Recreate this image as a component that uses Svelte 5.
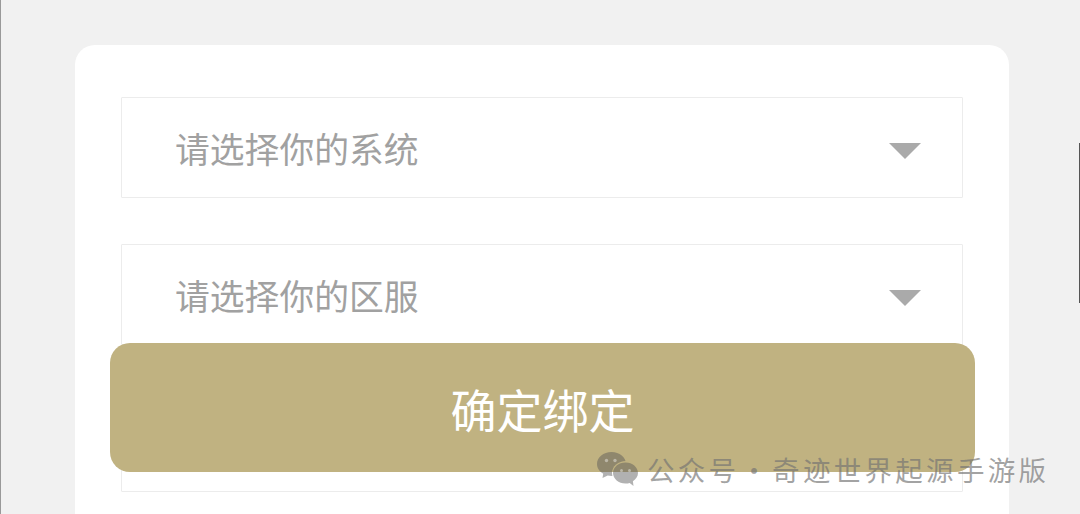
<script>
  const fields = ["请选择你的系统", "请选择你的区服", ""];
</script>

<div class="page">
  <div class="card">
    {#each fields as label}
      <div class="field">
        <span class="label">{label}</span>
        {#if label}
          <span class="arrow"></span>
        {/if}
      </div>
    {/each}
    <button class="submit">确定绑定</button>
  </div>
  <div class="mark">
    <svg width="41" height="36" viewBox="0 0 41 36">
      <mask id="gap">
        <rect width="41" height="36" fill="#fff"/>
        <ellipse cx="29" cy="22" rx="14" ry="12" fill="#000"/>
      </mask>
      <g fill="#555" fill-opacity="0.46">
        <path mask="url(#gap)" d="M14.500 1C6.500 1 0 6.400 0 13c0 4 2.400 7.500 6.200 9.700L5.500 27l5.200-2.400c1.200.3 2.500.4 3.800.4C22.500 25 29 19.600 29 13S22.500 1 14.500 1z"/>
        <path d="M41 22c0-5.800-5.600-10.500-12.500-10.500S16 16.200 16 22s5.600 10.500 12.500 10.500c1.500 0 2.900-.2 4.200-.6l3.800 3.100-.6-4.800C39 28.300 41 25.300 41 22z"/>
      </g>
      <g fill="#fff" fill-opacity="0.4">
        <circle cx="9.500" cy="9.500" r="1.700"/>
        <circle cx="18" cy="9.500" r="1.700"/>
        <circle cx="24.500" cy="19.500" r="1.500"/>
        <circle cx="32.500" cy="19.500" r="1.500"/>
      </g>
    </svg>
    <span class="mark-text">公众号 · 奇迹世界起源手游版</span>
  </div>
</div>

<style>
  :global(body) {
    margin: 0;
    background: #f1f1f1;
  }

  .page {
    position: relative;
    width: 1080px;
    height: 514px;
    box-sizing: border-box;
    padding: 45px 0 0 75px;
    overflow: hidden;
    background: #f1f1f1;
    font-family: "Noto Sans CJK SC", "Liberation Sans", sans-serif;
  }

  /* scrollbar-ish lines at the edges of the capture */
  .page::before {
    content: "";
    position: absolute;
    left: 0;
    top: 0;
    width: 1px;
    height: 100%;
    background: #999;
  }

  .page::after {
    content: "";
    position: absolute;
    right: 0;
    top: 143px;
    width: 1px;
    height: 160px;
    background: #555;
  }

  .card {
    position: relative;
    width: 934px;
    height: 520px;
    box-sizing: border-box;
    padding: 52px 46px;
    display: flex;
    flex-direction: column;
    gap: 46px;
    background: #fff;
    border-radius: 20px;
  }

  .field {
    height: 101px;
    flex: none;
    box-sizing: border-box;
    padding: 0 41px 0 53px;
    display: flex;
    align-items: center;
    justify-content: space-between;
    border: 1px solid #ececec;
    border-radius: 1px;
  }

  .label {
    font-size: 34.8px;
    color: #a1a1a1;
  }

  .arrow {
    width: 0;
    height: 0;
    margin-top: 6px;
    border-left: 16px solid transparent;
    border-right: 16px solid transparent;
    border-top: 16px solid #aaa;
  }

  .submit {
    position: absolute;
    left: 35px;
    top: 298px;
    width: 865px;
    height: 129px;
    padding: 0;
    border: 0;
    border-radius: 20px;
    background: #c0b281;
    color: #fff;
    font-family: inherit;
    font-size: 46px;
  }

  .mark {
    position: absolute;
    left: 597px;
    top: 449px;
    display: flex;
    align-items: center;
    gap: 9px;
  }

  .mark-text {
    font-size: 27.5px;
    letter-spacing: 3.3px;
    word-spacing: -8.5px;
    color: rgba(115, 115, 115, 0.66);
    white-space: nowrap;
  }
</style>
